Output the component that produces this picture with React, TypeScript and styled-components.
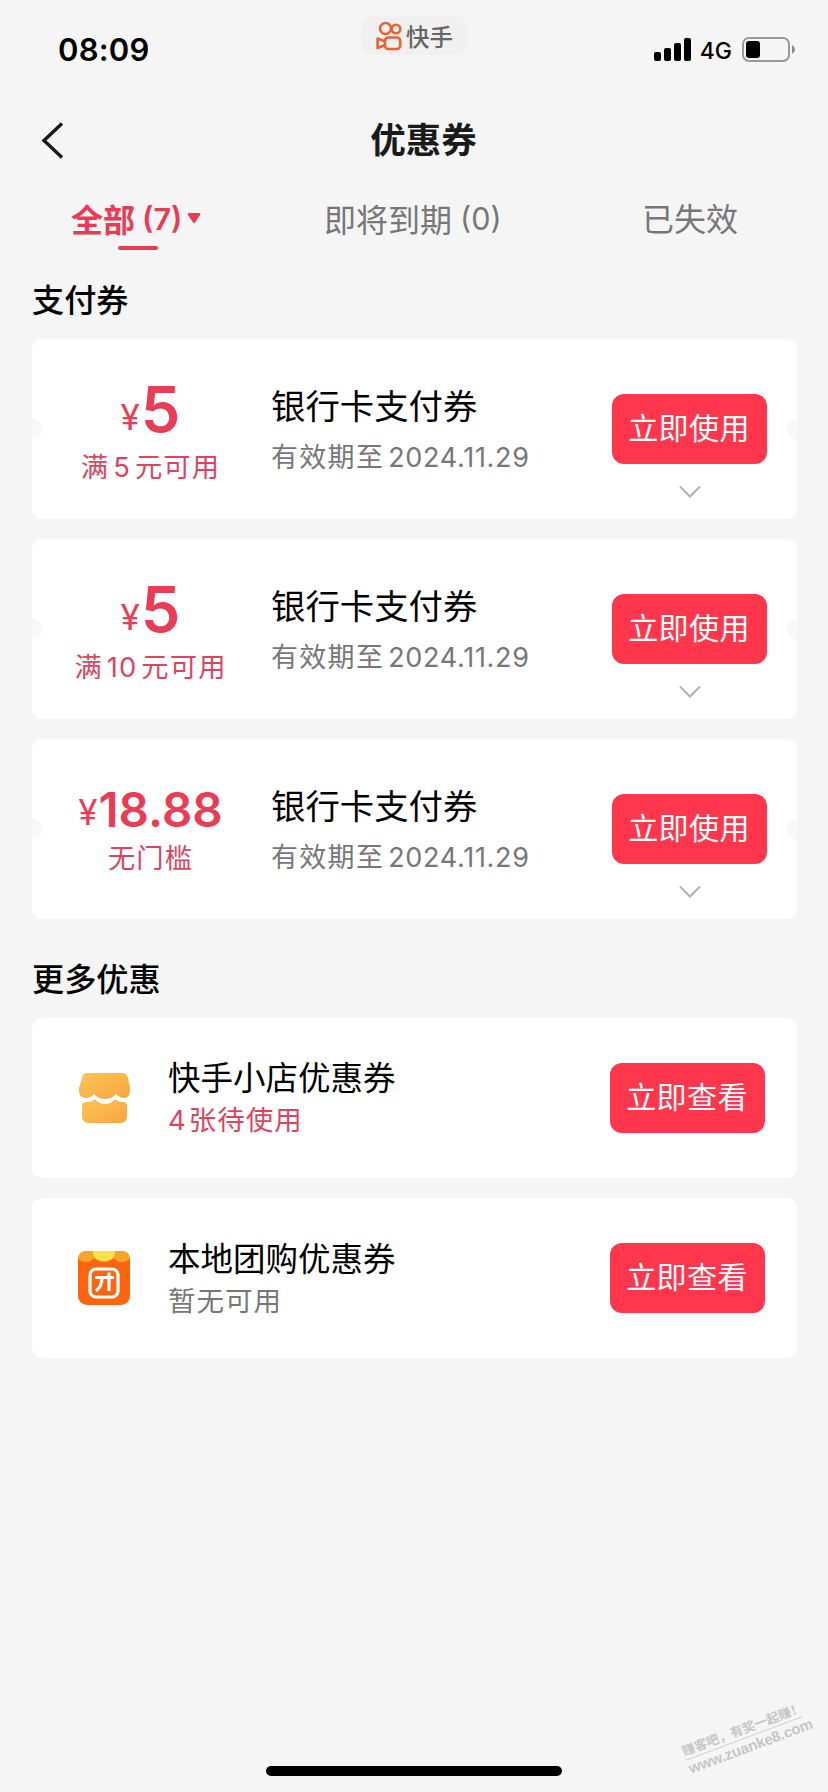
import React from 'react';
import styled, { createGlobalStyle } from 'styled-components';

const latin = 'Inter, "Noto Sans CJK SC", sans-serif';
const han = '"Noto Sans CJK SC", sans-serif';

const GlobalStyle = createGlobalStyle`
  * { box-sizing: border-box; }
  body {
    margin: 0;
    background: #f5f5f5;
    font-family: ${latin};
    color: #050505;
  }
`;

const Screen = styled.div`
  position: relative;
  display: flex;
  flex-direction: column;
  width: 828px;
  height: 1792px;
  overflow: hidden;
  background: #f5f5f5;
`;

const StatusBar = styled.header`
  display: grid;
  grid-template-columns: 303px 107px 1fr;
  height: 100px;
  padding: 0 32px 0 58px;
`;

const Clock = styled.time`
  padding-top: 31px;
  font-size: 31px;
  line-height: 38px;
  font-weight: 600;
  letter-spacing: 0.2px;
  color: #000;
`;

const AppPill = styled.div`
  display: flex;
  align-items: center;
  gap: 4px;
  height: 39px;
  margin-top: 16px;
  padding-left: 15px;
  border-radius: 12px;
  background: #f0f0f0;
  font-family: ${han};
  font-size: 23.5px;
  font-weight: 500;
  color: #666;
`;

const StatusIcons = styled.div`
  display: flex;
  align-items: center;
  justify-content: flex-end;
  height: 38px;
  margin-top: 31px;
`;

const Network = styled.span`
  margin: 2px 10px 0 8px;
  font-size: 23px;
  font-weight: 500;
  color: #000;
`;

const NavBar = styled.div`
  display: grid;
  grid-template-columns: 80px 1fr 61px;
  align-items: center;
  height: 80px;
`;

const BackButton = styled.button`
  display: flex;
  padding: 0 0 0 40px;
  border: 0;
  background: none;
`;

const Title = styled.h1`
  margin: 0 0 5px;
  text-align: center;
  font-family: ${han};
  font-size: 35.5px;
  line-height: 50px;
  font-weight: 700;
  color: #1a1a1a;
`;

const Tabs = styled.nav`
  display: grid;
  grid-template-columns: 253px 1fr auto;
  height: 88px;
  padding: 13px 90px 0 71px;
`;

const Tab = styled.div<{ $active?: boolean }>`
  display: flex;
  flex-direction: column;
  align-items: flex-start;
  font-size: 32px;
  line-height: 48px;
  font-weight: ${(p) => (p.$active ? 700 : 400)};
  color: ${(p) => (p.$active ? '#ea3a56' : '#777')};
`;

const TabLabel = styled.div`
  display: flex;
  align-items: center;
  font-family: ${han};
`;

const Count = styled.span<{ $light?: boolean }>`
  margin: 2px 0 0 ${(p) => (p.$light ? 8 : 7)}px;
  font-family: ${latin};
  font-size: 30.5px;
  font-weight: ${(p) => (p.$light ? 400 : 600)};
`;

const Caret = styled.svg`
  margin-left: 5px;
`;

const Underline = styled.div`
  width: 40px;
  height: 4px;
  margin: 3px 0 0 47px;
  border-radius: 2px;
  background: #ea3a56;
`;

const Section = styled.section<{ $gapTop: number }>`
  padding: ${(p) => p.$gapTop}px 31px 0 32px;
`;

const Heading = styled.h2`
  margin: 0;
  font-family: ${han};
  font-size: 32.2px;
  line-height: 48px;
  font-weight: 500;
  color: #000;
`;

const Cards = styled.div<{ $top: number }>`
  display: flex;
  flex-direction: column;
  gap: 20px;
  padding-top: ${(p) => p.$top}px;
`;

const Coupon = styled.article`
  display: grid;
  grid-template-columns: 239px 1fr 190px;
  height: 180px;
  border-radius: 10px;
  background:
    radial-gradient(circle 11px at 0 90px, #f8f8f8 10px, transparent 11px),
    radial-gradient(circle 11px at 100% 90px, #f8f8f8 10px, transparent 11px),
    #fff;
`;

const Value = styled.div`
  display: flex;
  flex-direction: column;
  align-items: center;
  padding-right: 2px;
  color: #e93d55;
`;

const Amount = styled.div<{ $small?: boolean }>`
  display: flex;
  align-items: baseline;
  height: 104px;
  line-height: ${(p) => (p.$small ? '141px' : '140px')};
  font-size: ${(p) => (p.$small ? '47.5px' : '63px')};
  font-weight: 600;
`;

const Yen = styled.span`
  position: relative;
  top: -2px;
  margin-right: 1px;
  font-size: 35px;
  font-weight: 400;
`;

const Condition = styled.div<{ $lift?: boolean }>`
  margin-top: ${(p) => (p.$lift ? '-7px' : '2px')};
  font-family: ${han};
  font-size: 27.3px;
  line-height: 40px;
  letter-spacing: 1.1px;
  color: #dc4560;
  white-space: nowrap;
`;

const Num = styled.span`
  margin: 0 4px;
  font-family: ${latin};
`;

const Info = styled.div`
  display: flex;
  flex-direction: column;
  padding-top: 40px;
`;

const Name = styled.h3<{ $size?: number }>`
  margin: 0;
  font-family: ${han};
  font-size: ${(p) => p.$size ?? 34.4}px;
  line-height: 50px;
  font-weight: 400;
  color: #000;
`;

const Expiry = styled.p`
  margin: 7px 0 0;
  font-family: ${han};
  font-size: 27px;
  line-height: 40px;
  letter-spacing: 1.3px;
  color: #777;
`;

const DateText = styled.span`
  margin-left: 4px;
  font-family: ${latin};
  letter-spacing: 0.7px;
`;

const Actions = styled.div`
  display: flex;
  flex-direction: column;
  align-items: center;
  width: 155px;
  margin-left: 5px;
  padding-top: 55px;
`;

const ActionButton = styled.button`
  width: 155px;
  height: 70px;
  padding: 0 1px 6px 0;
  border: 0;
  border-radius: 12px;
  background: #ff364c;
  font-family: ${han};
  font-size: 30px;
  line-height: 44px;
  letter-spacing: 0.4px;
  color: #fff;
`;

const Chevron = styled.svg`
  margin-top: 21px;
`;

const Offer = styled.article`
  display: grid;
  grid-template-columns: 46px 56px 1fr 155px;
  align-items: center;
  height: 160px;
  padding-right: 32px;
  border-radius: 10px;
  background: #fff;
`;

const OfferIcon = styled.div`
  grid-column: 2;
  display: flex;
`;

const OfferText = styled.div`
  margin-top: -3px;
  padding-left: 34px;
`;

const OfferNote = styled.p<{ $accent?: boolean }>`
  margin: -5px 0 0;
  font-family: ${han};
  font-size: 27.5px;
  line-height: 44px;
  letter-spacing: 1px;
  color: ${(p) => (p.$accent ? '#dc4560' : '#777')};
`;

const OfferCount = styled.span`
  margin-right: 2px;
  font-family: ${latin};
`;

const HomeIndicator = styled.div`
  align-self: center;
  width: 296px;
  height: 10px;
  margin: auto 0 16px;
  border-radius: 5px;
  background: #000;
`;

const Watermark = styled.div`
  position: absolute;
  left: 682px;
  top: 1720px;
  width: 124px;
  transform: rotate(-20.5deg);
  font-family: ${han};
  color: #c6c6c6;
  text-align: center;
  white-space: nowrap;
`;

const WatermarkTop = styled.div`
  border-bottom: 1px solid #d2d2d2;
  font-size: 12.8px;
  line-height: 18px;
  font-weight: 700;
`;

const WatermarkUrl = styled.div`
  font-family: "Liberation Sans", sans-serif;
  font-size: 15px;
  line-height: 18px;
  font-weight: 700;
  letter-spacing: -0.1px;
`;

const KuaishouLogo = () => (
  <svg width="26" height="30" viewBox="0 0 26 30" fill="none" stroke="#e8632f" strokeWidth="2.6">
    <circle cx="9.500" cy="7.500" r="5.5" />
    <circle cx="20" cy="8" r="4.3" />
    <rect x="9" y="16.500" width="15.2" height="11.500" rx="3.5" />
    <path d="M9 20.500L1.600 17.500V27L9 24" strokeLinejoin="round" />
  </svg>
);

const ShopIcon = () => (
  <svg width="56" height="56" viewBox="0 0 56 56">
    <defs>
      <linearGradient id="awning" x1="0" y1="0" x2="1" y2="1">
        <stop offset="0" stopColor="#fbc558" />
        <stop offset="1" stopColor="#f9a53d" />
      </linearGradient>
    </defs>
    <path fill="url(#awning)" d="M9 3H44Q49 3 50 8L52 18V22Q51 28 46 28Q42 28 38 24Q34 29 27 29Q20 29 16 24Q13 28 8 28Q1 28 1 21V18L4 8Q5 3 9 3Z" />
    <path fill="url(#awning)" d="M4 35Q4 32 9 32Q14 32 17 29Q21 34 27 34Q33 34 37 29Q40 32 45 32Q49 32 49 36V46Q49 53 42 53H11Q4 53 4 46Z" />
  </svg>
);

const GroupBuyIcon = () => (
  <svg width="56" height="56" viewBox="0 0 56 56">
    <rect y="1" width="52" height="54" rx="9" fill="#fb6510" />
    <path fill="#fca32b" d="M8 1H44Q51 1 52 8Q48 13 42 12Q38 11 36 8Q32 12 26 12Q20 12 16 8Q13 12 8 12Q3 12 0 8Q1 1 8 1Z" />
    <path fill="#fee24c" d="M15 1H37V5Q33 11 26 11Q19 11 15 5Z" />
    <g fill="none" stroke="#fff" strokeWidth="3.2">
      <rect x="12" y="19" width="28" height="28" rx="6" />
      <path d="M17 27.500H36M31 22.500V41M24 28Q24 36 18 41" />
    </g>
  </svg>
);

const coupons = [
  { amount: '5', pre: '满', num: '5', post: '元可用' },
  { amount: '5', pre: '满', num: '10', post: '元可用' },
  { amount: '18.88', pre: '无门槛', num: '', post: '' },
];

const offers = [
  { name: '快手小店优惠券', note: '张待使用', count: '4', icon: <ShopIcon /> },
  { name: '本地团购优惠券', note: '暂无可用', count: '', icon: <GroupBuyIcon /> },
];

export default function App() {
  return (
    <>
      <GlobalStyle />
      <Screen>
        <StatusBar>
          <Clock>08:09</Clock>
          <AppPill>
            <KuaishouLogo />
            快手
          </AppPill>
          <StatusIcons>
            <svg width="38" height="24" viewBox="0 0 38 24">
              <rect x="0" y="14" width="7" height="9" rx="2" />
              <rect x="10" y="10" width="7" height="13" rx="2" />
              <rect x="20" y="5" width="7" height="18" rx="2" />
              <rect x="30" y="0" width="7" height="23" rx="2" />
            </svg>
            <Network>4G</Network>
            <svg width="54" height="26" viewBox="0 0 54 26">
              <rect x="1" y="1" width="46" height="23" rx="6" fill="none" stroke="#999" strokeWidth="2" />
              <rect x="4" y="4" width="14" height="17" rx="3" />
              <path d="M50 8Q53 10 53 12.500Q53 15 50 17Z" fill="#888" />
            </svg>
          </StatusIcons>
        </StatusBar>
        <NavBar>
          <BackButton aria-label="返回">
            <svg width="26" height="38" viewBox="0 0 26 38" fill="none" stroke="#1a1a1a" strokeWidth="3.4">
              <path d="M22 2.500L4 19.500L22 36.500" />
            </svg>
          </BackButton>
          <Title>优惠券</Title>
        </NavBar>
        <Tabs>
          <Tab $active>
            <TabLabel>
              全部<Count>(7)</Count>
              <Caret width="14" height="11" viewBox="0 0 14 11" fill="#ea3a56">
                <path d="M1.500 0H12.500Q14 .5 13 2L8 9.500Q7 11 6 9.500L1 2Q0 .5 1.500 0Z" />
              </Caret>
            </TabLabel>
            <Underline />
          </Tab>
          <Tab>
            <TabLabel>
              即将到期<Count $light>(0)</Count>
            </TabLabel>
          </Tab>
          <Tab>
            <TabLabel>已失效</TabLabel>
          </Tab>
        </Tabs>
        <Section $gapTop={6}>
          <Heading>支付券</Heading>
          <Cards $top={17}>
            {coupons.map((c, i) => (
              <Coupon key={i}>
                <Value>
                  <Amount $small={c.amount.length > 1}>
                    <Yen>¥</Yen>
                    {c.amount}
                  </Amount>
                  <Condition $lift={!c.num}>
                    {c.pre}
                    {c.num && <Num>{c.num}</Num>}
                    {c.post}
                  </Condition>
                </Value>
                <Info>
                  <Name>银行卡支付券</Name>
                  <Expiry>
                    有效期至<DateText>2024.11.29</DateText>
                  </Expiry>
                </Info>
                <Actions>
                  <ActionButton>立即使用</ActionButton>
                  <Chevron width="22" height="14" viewBox="0 0 22 14" fill="none" stroke="#b0b0b0" strokeWidth="2">
                    <path d="M1 1.500L11 11.500L21 1.500" />
                  </Chevron>
                </Actions>
              </Coupon>
            ))}
          </Cards>
        </Section>
        <Section $gapTop={34}>
          <Heading>更多优惠</Heading>
          <Cards $top={17}>
            {offers.map((o) => (
              <Offer key={o.name}>
                <OfferIcon>{o.icon}</OfferIcon>
                <OfferText>
                  <Name $size={32.5}>{o.name}</Name>
                  <OfferNote $accent={!!o.count}>
                    {o.count && <OfferCount>{o.count}</OfferCount>}
                    {o.note}
                  </OfferNote>
                </OfferText>
                <ActionButton>立即查看</ActionButton>
              </Offer>
            ))}
          </Cards>
        </Section>
        <HomeIndicator />
        <Watermark>
          <WatermarkTop>赚客吧，有奖一起赚！</WatermarkTop>
          <WatermarkUrl>www.zuanke8.com</WatermarkUrl>
        </Watermark>
      </Screen>
    </>
  );
}
